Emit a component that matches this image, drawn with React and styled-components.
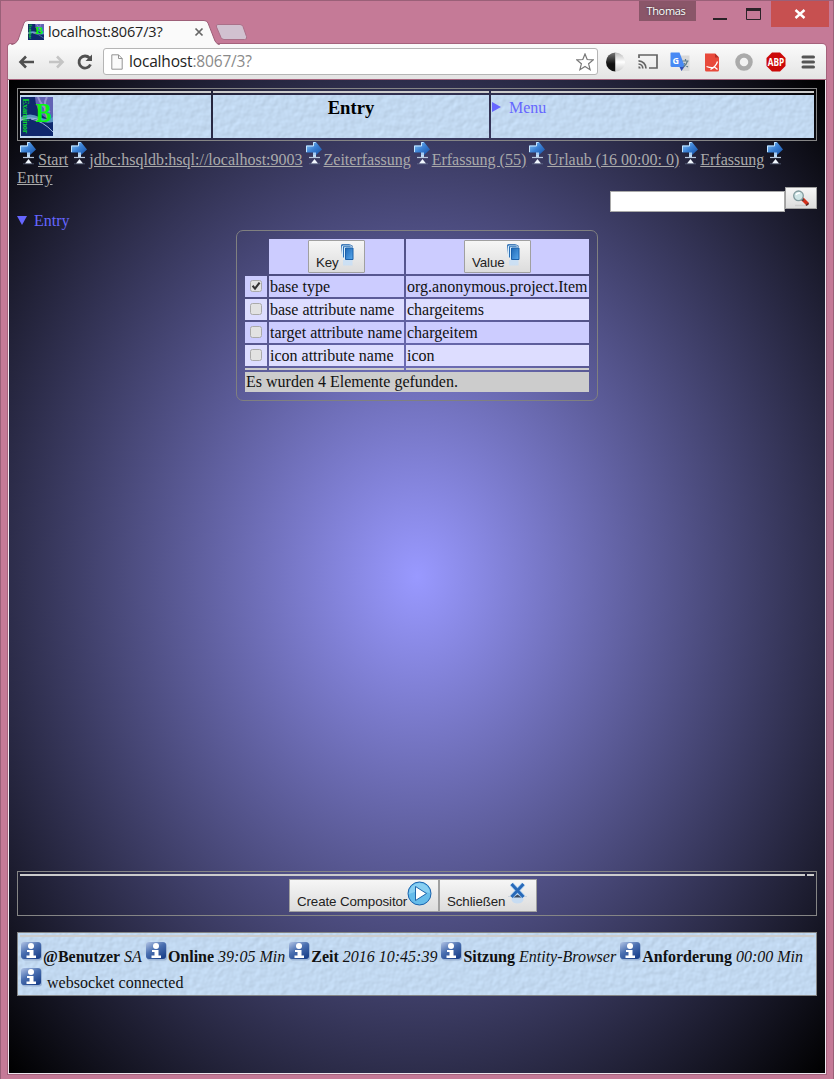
import React from 'react';
import styled, { createGlobalStyle, css } from 'styled-components';

const GlobalStyle = createGlobalStyle`
  * { box-sizing: border-box; }
  html, body, #root { margin: 0; padding: 0; }
  body { width: 834px; height: 1079px; overflow: hidden; }
`;

/* ---------- window frame ---------- */
const Frame = styled.div`
  width: 834px;
  height: 1079px;
  padding: 0 7px 0 7px;
  background: #c57a97;
  border: 1px solid #9a6078;
  border-bottom: 0;
  display: flex;
  flex-direction: column;
  font-family: 'Liberation Serif', 'Times New Roman', serif;
`;
const TitleBar = styled.div`
  height: 43px;
  flex: none;
  display: flex;
  justify-content: space-between;
`;
const TabStrip = styled.div`
  display: flex;
  align-items: flex-end;
  padding-left: 3px;
`;
const Tab = styled.div`
  position: relative;
  z-index: 1;
  width: 209px;
  height: 25px;
  margin-bottom: -1px;
  padding: 0 16px 2px 17px;
  display: flex;
  align-items: center;
  font: 14.5px/20px 'Open Sans', 'Noto Sans', sans-serif;
  letter-spacing: -0.18px;
  color: #222;
`;
const TabShape = styled.svg`
  position: absolute;
  left: 0;
  top: 0;
  z-index: -1;
`;
const TabTitle = styled.span`
  flex: 1;
  padding-left: 4px;
  white-space: nowrap;
`;
const NewTab = styled.svg`
  margin: 0 0 4px -5px;
`;
const WindowControls = styled.div`
  display: flex;
  align-items: flex-start;
  margin-right: -3px;
`;
const UserBadge = styled.div`
  width: 57px;
  height: 20px;
  margin-right: 17px;
  background: #8a5669;
  color: #fff;
  font: 11px/20px 'Open Sans', sans-serif;
  letter-spacing: -0.3px;
  text-align: center;
  padding-right: 3px;
  text-shadow: 0 0 2px #333;
`;
const CloseButton = styled.div`
  width: 58px;
  height: 26px;
  margin-left: 9px;
  background: #c75050;
  display: flex;
  align-items: center;
  justify-content: center;
`;
const Toolbar = styled.div`
  height: 36px;
  flex: none;
  display: flex;
  align-items: center;
  border-radius: 3px 4px 0 0;
  border-bottom: 1px solid #a0a0a0;
  background: linear-gradient(#fbfbfb, #e4e4e4);
  box-shadow: 0 0 0 1px #a5627c;
  padding: 0 8px 0 9px;
`;
const NavIcons = styled.div`
  width: 86px;
  flex: none;
  display: flex;
  gap: 9px;
`;
const Address = styled.div`
  width: 495px;
  flex: none;
  height: 27px;
  border: 1px solid #b5b5b5;
  border-radius: 3px;
  background: #fff;
  padding: 0 3px 0 7px;
  display: flex;
  align-items: center;
`;
const Url = styled.span`
  flex: 1;
  margin: -1px 0 0 6px;
  font: 15.5px/22px 'Open Sans', 'Noto Sans', sans-serif;
  letter-spacing: -0.17px;
  color: #222;
`;
const Muted = styled.span`
  color: #8a8a8a;
`;
const Extensions = styled.div`
  display: flex;
  flex: none;
  gap: 10px;
  margin-left: 7px;
`;

/* ---------- page ---------- */
const Page = styled.main`
  flex: none;
  width: 818px;
  height: 994px;
  padding: 8px 8px 77px;
  border: 1px solid #f0e6ee;
  border-top: 0;
  background: radial-gradient(#9999ff, #000);
  box-shadow: 0 0 0 1px #a5627c;
  display: flex;
  flex-direction: column;
  font-size: 16px;
  line-height: 18px;
  color: #111;
`;
const Panel = styled.div`
  position: relative;
  border: 1px solid #858585;
  padding: 2px;
`;
const Rule = styled.div`
  display: grid;
  grid-template-columns: ${(p) => p.$columns};
  gap: 2px;
  height: 2px;
  margin-bottom: 2px;
`;
const RulePart = styled.div`
  background: #ccc;
`;
const HeaderGrid = styled.div`
  display: grid;
  grid-template-columns: 191px 276px 323px;
  gap: 2px;
  height: 43px;
`;
const HeaderCell = styled.div`
  position: relative;
  background: #c4dcf4;
  padding: ${(p) => p.$pad || '2px 1px'};
`;
const PlasterSvg = styled.svg`
  position: absolute;
  inset: 0;
  width: 100%;
  height: 100%;
`;
const Above = styled.div`
  position: relative;
`;
const Heading = styled.h1`
  position: relative;
  margin: 0;
  font-size: 18.7px;
  line-height: 21px;
  text-align: center;
  color: #000;
`;
const Disclosure = styled.div`
  position: relative;
  display: flex;
  align-items: center;
  gap: ${(p) => (p.$open ? 7 : 8)}px;
  color: #6666ff;
`;
const Marker = styled.svg`
  margin-top: -2px;
`;
const Crumbs = styled.nav`
  color: #aaa;
`;
const Crumb = styled.a`
  color: #aaa;
  text-decoration: underline;
`;
const inlineIcon = css`
  display: inline-block;
  vertical-align: baseline;
`;
const SignSvg = styled.svg`
  ${inlineIcon}
  width: 21px;
  height: 24px;
`;
const SearchRow = styled.div`
  display: flex;
  justify-content: flex-end;
  align-items: flex-start;
  height: 25px;
`;
const SearchInput = styled.input`
  width: 175px;
  height: 21px;
  margin: 4px 0 0;
  padding: 1px;
  border: 1px solid #a9a9a9;
  background: #fff;
`;
const Button = styled.button`
  width: ${(p) => p.$w}px;
  height: ${(p) => p.$h || 33}px;
  padding: ${(p) => p.$pad || '0 7px 0 7px'};
  border: 1px solid #a0a0a0;
  border-radius: ${(p) => p.$r || 0}px;
  background: linear-gradient(#f6f6f6, #dcdcdc);
  color: #222;
  font: 13.33px/15px 'Liberation Sans', Arial, sans-serif;
  letter-spacing: -0.1px;
  display: inline-flex;
  justify-content: ${(p) => (p.$center ? 'center' : 'flex-start')};
  white-space: nowrap;
  vertical-align: top;
`;
const ButtonLabel = styled.span`
  margin-top: 14px;
`;
const ButtonIcon = styled.svg`
  flex: none;
  margin-top: ${(p) => p.$top || 0}px;
`;
const Fieldset = styled.section`
  align-self: center;
  border: 1px solid #808080;
  border-radius: 7px;
  padding: 6px;
`;
const Table = styled.table`
  width: 348px;
  table-layout: fixed;
  border-collapse: separate;
  border-spacing: 2px;
  text-align: left;
`;
const Col = styled.col`
  width: ${(p) => p.$w}px;
`;
const Row = styled.tr`
  height: ${(p) => p.$h}px;
`;
const Cell = styled.td`
  padding: 0 1px ${(p) => (p.$lift ? 1 : 0)}px;
  height: inherit;
  background: ${(p) => p.$bg || 'transparent'};
  text-align: ${(p) => p.$align || 'left'};
  vertical-align: middle;
  white-space: nowrap;
  line-height: ${(p) => (p.$thin ? 0 : '18px')};
`;
const Box = styled.svg`
  display: block;
  margin: 0 auto;
`;
const Footer = styled.footer`
  margin-top: auto;
  display: flex;
  flex-direction: column;
  gap: 16px;
`;
const ActionPanel = styled(Panel)`
  height: 45px;
`;
const Actions = styled.div`
  display: flex;
  justify-content: center;
  padding: 1px 8px 0 0;
`;
const StatusPanel = styled(Panel)`
  height: 64px;
  background: #c4dcf4;
`;
const StatusText = styled.div`
  position: relative;
  padding: 2px 0 0 1px;
  white-space: nowrap;
`;
const StatusLine = styled.div`
  height: 26px;
  line-height: 26px;
`;
const InfoSvg = styled.svg`
  display: inline-block;
  vertical-align: -1px;
  width: 22px;
  height: 22px;
`;
const LogoSvg = styled.svg`
  display: block;
  flex: none;
`;

const Plaster = ({ id }) => (
  <PlasterSvg>
    <filter id={id} x="0" y="0" width="100%" height="100%" colorInterpolationFilters="sRGB">
      <feTurbulence type="fractalNoise" baseFrequency="0.15" numOctaves="2" seed="8" />
      <feDiffuseLighting surfaceScale="0.27" diffuseConstant="1.145" lightingColor="#c3daf2">
        <feDistantLight azimuth="225" elevation="60" />
      </feDiffuseLighting>
    </filter>
    <rect width="100%" height="100%" filter={`url(#${id})`} />
  </PlasterSvg>
);

const LogoMark = ({ w, h }) => (
  <LogoSvg width={w} height={h} viewBox="0 0 32 39" preserveAspectRatio="none">
    <rect width="32" height="39" fill="#10286d" />
    <path d="M14 0H32V24Q20 20 17 13Q14 6 14 0" fill="#6262b4" />
    <path d="M17 0Q20 9 29 15M26 0Q21 8 27 22" stroke="#aaa1dc" strokeWidth="2" fill="none" opacity=".7" />
    <path d="M0 20Q9 15 18 20Q27 24 32 20V25Q24 27 17 23Q9 20 0 24Z" fill="#5c93bf" />
    <path d="M10 22Q22 24 32 35M0 23Q9 19 19 23" stroke="#9fb8dc" fill="none" />
    <text x="14.500" y="24.500" fontFamily="Liberation Serif" fontWeight="bold" fontSize="27" textLength="16" lengthAdjust="spacingAndGlyphs" fill="#08f512">B</text>
    <text transform="translate(1.500 1.500) rotate(90)" fontFamily="Liberation Serif" fontWeight="bold" fontSize="8.500" textLength="35" fill="#0bd52d">Examinor</text>
  </LogoSvg>
);

const Sign = () => (
  <SignSvg viewBox="0 0 21 24">
    <defs>
      <linearGradient id="signBlue" x1="0" y1="0" x2="1" y2="1">
        <stop offset="0" stopColor="#8cc8f5" />
        <stop offset=".5" stopColor="#3a80d4" />
        <stop offset="1" stopColor="#1550a5" />
      </linearGradient>
    </defs>
    <path d="M10 13h3v4h-3z" fill="#bcd9f4" />
    <path d="M6 16.500h11" stroke="#b9c9de" strokeWidth="1.200" />
    <path d="M11.500 18l3.500 4.500H8z" fill="#f2f8ff" />
    <path d="M6 22.800h11" stroke="#7e8ea8" opacity=".5" />
    <path d="M3 4.500h7V1h3L19 8.500 13 14h-3v-2.500H3z" fill="url(#signBlue)" />
    <path d="M3.500 11V5h7V1.500h2" stroke="#c5e5ff" fill="none" />
    <path d="M10 11.500h3v3h-3z" fill="#c5e5ff" opacity=".8" />
  </SignSvg>
);

const Info = () => (
  <InfoSvg viewBox="0 0 22 22">
    <defs>
      <linearGradient id="infoBlue" x1="0" y1="0" x2=".7" y2="1">
        <stop offset="0" stopColor="#b3c5e6" />
        <stop offset=".5" stopColor="#4a6fb0" />
        <stop offset="1" stopColor="#1d438c" />
      </linearGradient>
    </defs>
    <rect x="1" y="2" width="20" height="17.500" rx="3" fill="#8ba5ca" opacity=".7" />
    <rect x="0" y="1" width="20" height="17" rx="3" fill="url(#infoBlue)" />
    <circle cx="10" cy="5" r="3" fill="#fff" />
    <path d="M6 9h6.500v5.500H15V17H5.500v-2.500H8.500V11H6z" fill="#fff" />
  </InfoSvg>
);

const Sheets = () => (
  <ButtonIcon $top={2} width="17" height="24" viewBox="0 0 17 24">
    <defs>
      <linearGradient id="sheetBlue" x1="0" y1="0" x2="1" y2="1">
        <stop offset="0" stopColor="#1e67b4" />
        <stop offset="1" stopColor="#58a9ee" />
      </linearGradient>
    </defs>
    <path d="M4 17h9.500v5.500H4z" fill="#c6dff7" opacity=".8" />
    <path d="M2 2h9v10.500l-8-1z" fill="#2c70b7" />
    <path d="M3.500 14V3h8.500" stroke="#d8eefd" fill="none" />
    <path d="M4 3.500h8.500V14.500H4z" fill="#2c70b7" />
    <path d="M5.500 16V4.500h8" stroke="#d8eefd" fill="none" />
    <path d="M6.500 5h7.500v11.500h-7.500z" fill="url(#sheetBlue)" stroke="#1b60aa" />
    <path d="M2.500 1.500h8l3.500 2" fill="none" stroke="#1b60aa" strokeWidth=".8" />
  </ButtonIcon>
);

const Check = ({ on }) => (
  <Box width="12" height="12" viewBox="0 0 12 12">
    <rect x=".5" y=".5" width="11" height="11" rx="2" fill="#e2e2e2" stroke="#aaa" />
    {on && <path d="M2.600 5.800l2.400 2.800 4.600-6" fill="none" stroke="#333" strokeWidth="2.100" />}
  </Box>
);

const rows = [
  ['base type', 'org.anonymous.project.Item', true],
  ['base attribute name', 'chargeitems', false],
  ['target attribute name', 'chargeitem', false],
  ['icon attribute name', 'icon', false],
];
const crumbs = [
  'Start',
  'jdbc:hsqldb:hsql://localhost:9003',
  'Zeiterfassung',
  'Erfassung (55)',
  'Urlaub (16 00:00: 0)',
  'Erfassung',
  'Entry',
];
const status = [
  ['@Benutzer', 'SA'],
  ['Online', '39:05 Min'],
  ['Zeit', '2016 10:45:39'],
  ['Sitzung', 'Entity-Browser'],
  ['Anforderung', '00:00 Min'],
];

const ExtensionIcons = () => (
  <Extensions>
    <svg width="22" height="22" viewBox="0 0 22 22">
      <defs>
        <linearGradient id="halfDark" x1="0" y1="0" x2="0" y2="1">
          <stop offset="0" stopColor="#777" /><stop offset=".6" stopColor="#111" />
        </linearGradient>
        <linearGradient id="halfLight" x1="0" y1="0" x2="0" y2="1">
          <stop offset="0" stopColor="#bbb" /><stop offset=".5" stopColor="#fff" /><stop offset="1" stopColor="#ccc" />
        </linearGradient>
      </defs>
      <path d="M10.500 1.500a9.500 9.500 0 0 0 0 19z" fill="url(#halfDark)" />
      <path d="M10.500 1.500a9.500 9.500 0 0 1 0 19z" fill="url(#halfLight)" />
    </svg>
    <svg width="22" height="22" viewBox="0 0 22 22" fill="none" stroke="#636363" strokeWidth="1.700">
      <path d="M2 7V4h18v13h-8" />
      <path d="M1.500 9.800a7.500 7.500 0 0 1 7.500 7.700M1.500 13a4.500 4.500 0 0 1 4.300 4.500" />
      <path d="M1.500 15.200v2.300h2.200a2.200 2.200 0 0 0-2.200-2.300z" fill="#636363" stroke="none" />
    </svg>
    <svg width="22" height="22" viewBox="0 0 22 22">
      <path d="M9 4.500h11.500V20H12z" fill="#d9d9d9" />
      <path d="M10 15h6l-3.500 5z" fill="#3350b5" />
      <path d="M2 1.500h8.500L16 16H3Q1.500 16 1.500 14.500V2z" fill="#4889f4" />
      <text x="3.500" y="12.500" fontFamily="Open Sans" fontWeight="bold" fontSize="9" fill="#fff">G</text>
      <path d="M13.500 10h6M16.500 8v2M18.500 10q-1 4-4.500 6M15 12q1.500 3 4 4" fill="none" stroke="#607d8b" strokeWidth="1.200" />
    </svg>
    <svg width="22" height="22" viewBox="0 0 22 22">
      <path d="M4 2.500h10l4 4V19q0 1.500-1.500 1.500h-11Q4 20.500 4 19z" fill="#e8493b" />
      <path d="M14 2.500v4h4z" fill="#b52e26" />
      <path d="M9.500 18.500Q15 15.500 16.500 10.500M5.500 15.500q4 1.500 7 1M13.500 16l3 2.500" fill="none" stroke="#fff" strokeWidth="1.300" />
    </svg>
    <svg width="22" height="22"><circle cx="11" cy="11" r="6.500" fill="#f2f2f2" stroke="#aaa" strokeWidth="4.500" /></svg>
    <svg width="22" height="22" viewBox="0 0 22 22">
      <path d="M7 1.500h8l5.500 5.500v8L15 20.500H7L1.500 15V7z" fill="#cc0909" />
      <text x="2.800" y="14.700" fontFamily="Open Sans" fontWeight="bold" fontSize="10" textLength="16.500" lengthAdjust="spacingAndGlyphs" fill="#fff">ABP</text>
    </svg>
    <svg width="22" height="22" stroke="#555" strokeWidth="3" strokeLinecap="round"><path d="M6 6h10.500M6 11h10.500M6 16h10.500" /></svg>
  </Extensions>
);

export default function App() {
  return (
    <Frame>
      <GlobalStyle />
      <TitleBar>
        <TabStrip>
          <Tab>
            <TabShape width="209" height="25">
              <path d="M0 25Q5 24 7 20L13 3Q14 .5 17 .5H193Q196 .5 197 3L204 21Q206 24.500 209 25" fill="#fafafa" stroke="#9d5f78" />
              <path d="M4 25h202" stroke="#fafafa" strokeWidth="2" />
            </TabShape>
            <LogoMark w={16} h={16} />
            <TabTitle>localhost:8067/3?</TabTitle>
            <svg width="10" height="10"><path d="M1.500 1.500l7 7m0-7l-7 7" stroke="#666" strokeWidth="1.700" /></svg>
          </Tab>
          <NewTab width="32" height="16">
            <path d="M3 .5h22q2 0 3 2l3.500 10q1 3-2 3H9q-2 0-3-2L1.500 3Q.5.500 3 .5z" fill="#d1c1d0" stroke="#aa7089" />
          </NewTab>
        </TabStrip>
        <WindowControls>
          <UserBadge>Thomas</UserBadge>
          <svg width="49" height="26">
            <path d="M0 18h14" stroke="#2b2328" strokeWidth="2" />
            <path d="M33.500 8v10.500h14V8" stroke="#2b2328" fill="none" />
            <path d="M33 8.500h15" stroke="#2b2328" strokeWidth="3" />
          </svg>
          <CloseButton>
            <svg width="12" height="10"><path d="M1.500 1l9 8m0-8l-9 8" stroke="#fff" strokeWidth="2.400" /></svg>
          </CloseButton>
        </WindowControls>
      </TitleBar>
      <Toolbar>
        <NavIcons>
          <svg width="20" height="20" fill="none" stroke="#505050" strokeWidth="2.600"><path d="M17 10H4M9 4.500L3.500 10 9 15.500" /></svg>
          <svg width="20" height="20" fill="none" stroke="#c4c4c4" strokeWidth="2.600"><path d="M3 10h13M11 4.500l5.500 5.500-5.500 5.500" /></svg>
          <svg width="20" height="20"><path d="M14.500 6a6 6 0 1 0 1 6.500" fill="none" stroke="#505050" strokeWidth="2.800" /><path d="M17 2.500v6.500h-6.500z" fill="#505050" /></svg>
        </NavIcons>
        <Address>
          <svg width="12" height="16"><path d="M.8.800h6.700l3.700 3.700v10.700H.8zM7.500.800v3.700h3.700" fill="#fafafa" stroke="#949494" /></svg>
          <Url>localhost<Muted>:8067/3?</Muted></Url>
          <svg width="18" height="18" viewBox="0 0 18 18"><path d="M9 1l2.200 5.500 6 .4-4.600 3.900 1.500 5.900L9 13.500l-5.100 3.200 1.500-5.900L.8 6.900l6-.4z" fill="#fff" stroke="#777" strokeWidth="1.200" /></svg>
        </Address>
        <ExtensionIcons />
      </Toolbar>
      <Page>
        <Panel>
          <Rule $columns="191px 276px 323px"><RulePart /><RulePart /><RulePart /></Rule>
          <HeaderGrid>
            <HeaderCell><Plaster id="plasterA" /><Above><LogoMark w={32} h={39} /></Above></HeaderCell>
            <HeaderCell><Plaster id="plasterB" /><Heading>Entry</Heading></HeaderCell>
            <HeaderCell $pad="4px 1px">
              <Plaster id="plasterC" />
              <Disclosure><Marker width="9" height="10"><path d="M0 0l9 5-9 5z" fill="#66f" /></Marker>Menu</Disclosure>
            </HeaderCell>
          </HeaderGrid>
        </Panel>
        <Crumbs>
          {crumbs.map((c, i) => (
            <React.Fragment key={i}><Sign /><wbr /><Crumb>{c}</Crumb></React.Fragment>
          ))}
        </Crumbs>
        <SearchRow>
          <SearchInput />
          <Button $w={32} $h={22} $center $pad="2px 0 0">
            <svg width="18" height="17" viewBox="0 0 18 17">
              <path d="M3 15.500h11" stroke="#ccc" strokeWidth="1.500" />
              <path d="M10.500 9l4.500 4.500" stroke="#d32f1a" strokeWidth="3.500" strokeLinecap="round" />
              <path d="M14 15.500l2.500-2" stroke="#4a2c28" strokeWidth="1.200" />
              <path d="M9.500 8.500l2 2" stroke="#444" strokeWidth="2" />
              <circle cx="6.500" cy="5.800" r="4.800" fill="#cfe5e6" stroke="#829a9e" strokeWidth="1.300" />
              <path d="M4 5q1-2.500 4-2" stroke="#fff" strokeWidth="1.500" fill="none" />
            </svg>
          </Button>
        </SearchRow>
        <Disclosure $open><Marker width="10" height="9"><path d="M0 0h10L5 9z" fill="#66f" /></Marker>Entry</Disclosure>
        <Fieldset>
          <Table>
            <colgroup><Col $w={22} /><Col $w={135} /><Col $w={183} /></colgroup>
            <tbody>
              <Row $h={35}>
                <Cell />
                <Cell $bg="#ccccff" $align="center"><Button $w={57} $r={1}><ButtonLabel>Key</ButtonLabel><Sheets /></Button></Cell>
                <Cell $bg="#ccccff" $align="center"><Button $w={67} $r={1}><ButtonLabel>Value</ButtonLabel><Sheets /></Button></Cell>
              </Row>
              {rows.map(([key, value, on], i) => {
                const bg = i % 2 ? '#ddddff' : '#ccccff';
                return (
                  <Row key={key} $h={21}>
                    <Cell $lift $bg={bg}><Check on={on} /></Cell>
                    <Cell $bg={bg}>{key}</Cell>
                    <Cell $bg={bg}>{value}</Cell>
                  </Row>
                );
              })}
              <Row $h={2}><Cell $thin $bg="#ccc" /><Cell $thin $bg="#ccc" /><Cell $thin $bg="#ccc" /></Row>
              <Row $h={20}><Cell colSpan={3} $bg="#ccc">Es wurden 4 Elemente gefunden.</Cell></Row>
            </tbody>
          </Table>
        </Fieldset>
        <Footer>
          <ActionPanel>
            <Rule $columns="785px 7px"><RulePart /><RulePart /></Rule>
            <Actions>
              <Button $w={150}>
                <ButtonLabel>Create Compositor</ButtonLabel>
                <ButtonIcon $top={1} width="25" height="25" viewBox="0 0 25 25">
                  <circle cx="12.500" cy="12.500" r="11.500" fill="#65bcea" stroke="#1a62ad" />
                  <path d="M2 13a10.500 10.500 0 0 1 21-1Q12 8 2 13" fill="#a2dcf6" opacity=".6" />
                  <path d="M8.500 5.500L19.500 12.500l-11 7z" fill="#fff" stroke="#1f66aa" />
                </ButtonIcon>
              </Button>
              <Button $w={98}>
                <ButtonLabel>Schließen</ButtonLabel>
                <ButtonIcon $top={1} width="24" height="24" viewBox="0 0 24 24">
                  <ellipse cx="12.500" cy="18.500" rx="6" ry="4" fill="#c7dcf2" />
                  <path d="M3 15.500h19" stroke="#ccd4dc" />
                  <path d="M6.500 3l12 13M18.500 3L6.500 16" stroke="#a8cdf0" strokeWidth="4.400" />
                  <path d="M6.500 3l12 13M18.500 3L6.500 16" stroke="#2869b8" strokeWidth="2.800" />
                  <path d="M8.500 16.500l4-3 4 3z" fill="#394b62" />
                </ButtonIcon>
              </Button>
            </Actions>
          </ActionPanel>
          <StatusPanel>
            <Plaster id="plasterD" />
            <Above><Rule $columns="1fr"><RulePart /></Rule></Above>
            <StatusText>
              <StatusLine>
                {status.map(([k, v]) => (
                  <React.Fragment key={k}><Info /><b>{k}</b> <i>{v}</i> </React.Fragment>
                ))}
              </StatusLine>
              <StatusLine><Info /> websocket connected</StatusLine>
            </StatusText>
          </StatusPanel>
        </Footer>
      </Page>
    </Frame>
  );
}
